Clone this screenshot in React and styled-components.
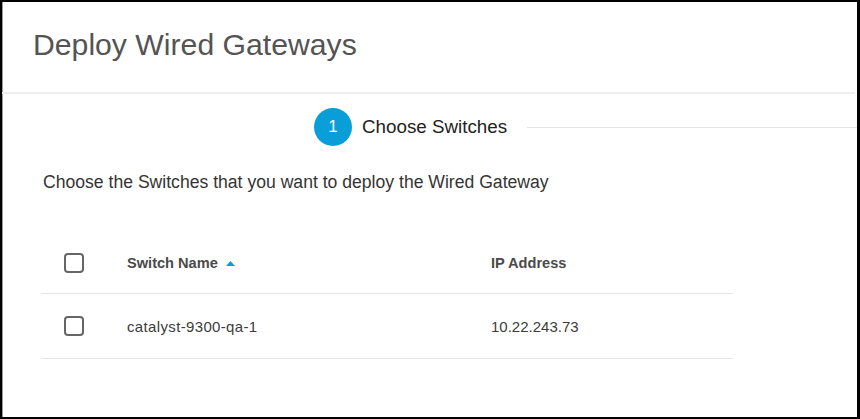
import React from "react";
import styled, { createGlobalStyle } from "styled-components";

const GlobalStyle = createGlobalStyle`
  html, body { margin: 0; padding: 0; background: #ffffff; }
  body { font-family: "Liberation Sans", Arial, sans-serif; }
  * { box-sizing: border-box; }
`;

const Frame = styled.div`
  width: 860px;
  height: 419px;
  border-top: 2px solid #000;
  border-left: 2px solid #000;
  border-right: 3px solid #000;
  border-bottom: 2px solid #000;
  box-shadow: inset 1px 0 0 #9a9a9a;
  background: #fff;
  display: flex;
  flex-direction: column;
  overflow: hidden;
`;

const Header = styled.header`
  height: 90px;
  padding: 28px 0 0 31px;
`;

const Title = styled.h1`
  margin: 0;
  font-size: 30.2px;
  line-height: 30px;
  font-weight: 400;
  color: #545454;
`;

const Divider = styled.div`
  height: 2px;
  background: #eeeeee;
  margin-right: 2px;
`;

const Stepper = styled.div`
  display: flex;
  align-items: center;
  margin-top: 14px;
  padding-left: 312px;
  height: 38px;
`;

const StepCircle = styled.div`
  width: 38px;
  height: 38px;
  border-radius: 50%;
  background: #0a9ed8;
  color: #fff;
  display: flex;
  align-items: center;
  justify-content: center;
  font-size: 17px;
  flex: none;
`;

const StepLabel = styled.span`
  margin-left: 10px;
  font-size: 18.8px;
  color: #222;
  white-space: nowrap;
`;

const StepLine = styled.div`
  flex: 1;
  height: 1px;
  background: #e4e4e4;
  margin-left: 20px;
`;

const Subtitle = styled.p`
  margin: 25px 0 0 41px;
  font-size: 17.6px;
  line-height: 22px;
  color: #343434;
  white-space: nowrap;
`;

const Table = styled.div`
  margin: 40px 0 0 39px;
  width: 692px;
  display: flex;
  flex-direction: column;
`;

const Row = styled.div`
  display: grid;
  grid-template-columns: 86px 364px 1fr;
  align-items: center;
  height: ${(p) => (p.$head ? "61px" : "65px")};
  border-bottom: 1px solid #e6e6e6;
`;

const CheckCell = styled.div`
  padding-left: 23px;
  display: flex;
  align-items: center;
`;

const Checkbox = styled.span`
  width: 20px;
  height: 20px;
  border: 2px solid #666;
  border-radius: 4px;
  display: block;
`;

const HeadCell = styled.div`
  font-size: 14.6px;
  font-weight: 700;
  color: #4a4a4a;
  display: flex;
  align-items: center;
  gap: 8px;
`;

const Cell = styled.div`
  font-size: 15px;
  color: #3c3c3c;
  letter-spacing: ${(p) => (p.$wide ? "0.35px" : "0")};
`;

const SortCaret = () => (
  <svg width="9" height="5" viewBox="0 0 9 5" aria-hidden="true">
    <path d="M0 5 L4.5 0 L9 5 Z" fill="#0a9ed8" />
  </svg>
);

const rows = [{ name: "catalyst-9300-qa-1", ip: "10.22.243.73" }];

export default function App() {
  return (
    <>
      <GlobalStyle />
      <Frame>
        <Header>
          <Title>Deploy Wired Gateways</Title>
        </Header>
        <Divider />
        <Stepper>
          <StepCircle>1</StepCircle>
          <StepLabel>Choose Switches</StepLabel>
          <StepLine />
        </Stepper>
        <Subtitle>Choose the Switches that you want to deploy the Wired Gateway</Subtitle>
        <Table>
          <Row $head>
            <CheckCell>
              <Checkbox />
            </CheckCell>
            <HeadCell>
              Switch Name <SortCaret />
            </HeadCell>
            <HeadCell>IP Address</HeadCell>
          </Row>
          {rows.map((r) => (
            <Row key={r.name}>
              <CheckCell>
                <Checkbox />
              </CheckCell>
              <Cell $wide>{r.name}</Cell>
              <Cell>{r.ip}</Cell>
            </Row>
          ))}
        </Table>
      </Frame>
    </>
  );
}
